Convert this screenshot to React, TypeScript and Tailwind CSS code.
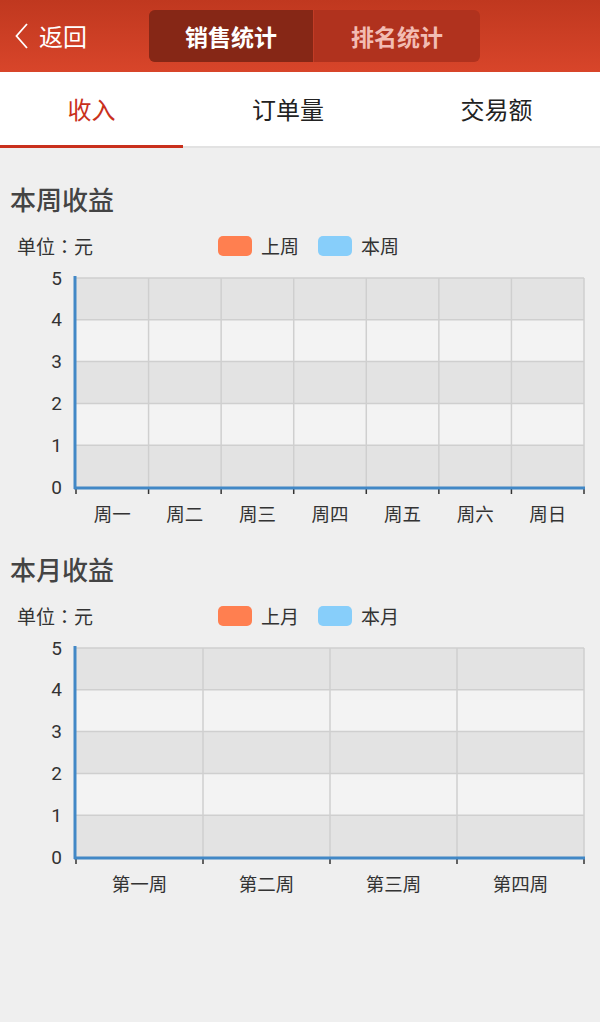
import React from 'react';

const FONT = { fontFamily: '"Noto Sans CJK SC", "Noto Sans", sans-serif' };

interface ChartProps {
  labels: string[];
}

// plot spans x 76..584 and y 18..227 inside a 600x275 drawing
function EmptyBarChart({ labels }: ChartProps) {
  const left = 76;
  const right = 584;
  const top = 18;
  const bottom = 227;
  const rowH = (bottom - top) / 5;
  const colW = (right - left) / labels.length;
  const rows = [0, 1, 2, 3, 4];

  return (
    <svg width="600" height="275" viewBox="0 0 600 275" className="block" style={FONT}>
      {rows.map((i) => (
        <rect
          key={i}
          x={left}
          y={top + i * rowH}
          width={right - left}
          height={rowH}
          fill={i % 2 === 0 ? '#e3e3e3' : '#f3f3f3'}
        />
      ))}
      {rows.map((i) => (
        <line
          key={'h' + i}
          x1={left}
          x2={right}
          y1={top + i * rowH}
          y2={top + i * rowH}
          stroke="#cfcfcf"
          strokeWidth="1.5"
        />
      ))}
      {labels.map((_, i) => (
        <line
          key={'v' + i}
          x1={left + (i + 1) * colW}
          x2={left + (i + 1) * colW}
          y1={top}
          y2={bottom}
          stroke="#cfcfcf"
          strokeWidth="1.5"
        />
      ))}
      {[5, 4, 3, 2, 1, 0].map((v, i) => (
        <text
          key={'y' + v}
          x="62"
          y={top + i * rowH}
          textAnchor="end"
          dominantBaseline="central"
          fontSize="19"
          fill="#333"
          style={{ fontFamily: 'Roboto, sans-serif' }}
        >
          {v}
        </text>
      ))}
      {labels.map((_, i) => (
        <line
          key={'t' + i}
          x1={left + i * colW}
          x2={left + i * colW}
          y1={bottom}
          y2={bottom + 7}
          stroke="#333"
          strokeWidth="1.5"
        />
      ))}
      <line x1={right} x2={right} y1={bottom} y2={bottom + 7} stroke="#333" strokeWidth="1.5" />
      <line x1="75" x2="75" y1={top - 2} y2={bottom + 2} stroke="#4288c6" strokeWidth="3" />
      <line x1="74" x2={right + 1} y1={bottom + 1} y2={bottom + 1} stroke="#4288c6" strokeWidth="3" />
      {labels.map((l, i) => (
        <text
          key={'x' + i}
          x={left + (i + 0.5) * colW}
          y="253"
          textAnchor="middle"
          dominantBaseline="central"
          fontSize="18.5"
          fill="#333"
        >
          {l}
        </text>
      ))}
    </svg>
  );
}

interface SectionProps {
  title: string;
  prev: string;
  cur: string;
  labels: string[];
}

function ChartSection({ title, prev, cur, labels }: SectionProps) {
  return (
    <section>
      <h2 className="h-8 pl-[10px] text-[26px] leading-8 font-medium text-[#444]">{title}</h2>
      <div className="mt-[17px] flex h-7 items-center text-[#333]">
        <span className="ml-[17px] w-[201px] text-[19px]">
          单位
          <span style={{ fontFamily: '"Noto Sans CJK JP", sans-serif' }}>：</span>元
        </span>
        <span className="h-5 w-[34px] rounded-[5px] bg-[#ff7f50]" />
        <span className="ml-[9px] text-[19px]">{prev}</span>
        <span className="ml-[19px] h-5 w-[34px] rounded-[5px] bg-[#87cefa]" />
        <span className="ml-[9px] text-[19px]">{cur}</span>
      </div>
      <EmptyBarChart labels={labels} />
    </section>
  );
}

export default function App() {
  return (
    <div className="h-[1022px] w-[600px] overflow-hidden bg-[#efefef]" style={FONT}>
      <header className="flex h-[72px] items-center bg-gradient-to-b from-[#c0381f] to-[#d8452a]">
        <div className="flex w-[149px] items-center pl-[15px] text-white">
          <svg width="14" height="26" viewBox="0 0 14 26" className="mr-[10px]">
            <path d="M12 1 L1.5 13 L12 25" fill="none" stroke="white" strokeWidth="1.8" />
          </svg>
          <span className="text-[24px] leading-none">返回</span>
        </div>
        <div className="flex h-[52px] w-[331px] overflow-hidden rounded-[6px] bg-[#b0321e]">
          <div className="flex w-[165px] items-center justify-center border-r border-[#c23c26] bg-[#862716] text-[23px] font-bold text-white">
            销售统计
          </div>
          <div className="flex flex-1 items-center justify-center text-[23px] font-bold text-[#f2bcb3]">
            排名统计
          </div>
        </div>
      </header>

      <nav className="flex h-[76px] border-b-2 border-[#e2e2e2] bg-white">
        <div className="flex w-[183px] items-center justify-center border-b-[3px] border-[#c9301c] -mb-[2px] text-[24px] text-[#c9301c]">
          收入
        </div>
        <div className="flex w-[210px] items-center justify-center text-[24px] text-[#222]">订单量</div>
        <div className="flex flex-1 items-center justify-center text-[24px] text-[#222]">交易额</div>
      </nav>

      <div className="pt-[35px]">
        <ChartSection
          title="本周收益"
          prev="上周"
          cur="本周"
          labels={['周一', '周二', '周三', '周四', '周五', '周六', '周日']}
        />
        <div className="mt-[18px]">
          <ChartSection
            title="本月收益"
            prev="上月"
            cur="本月"
            labels={['第一周', '第二周', '第三周', '第四周']}
          />
        </div>
      </div>
    </div>
  );
}
